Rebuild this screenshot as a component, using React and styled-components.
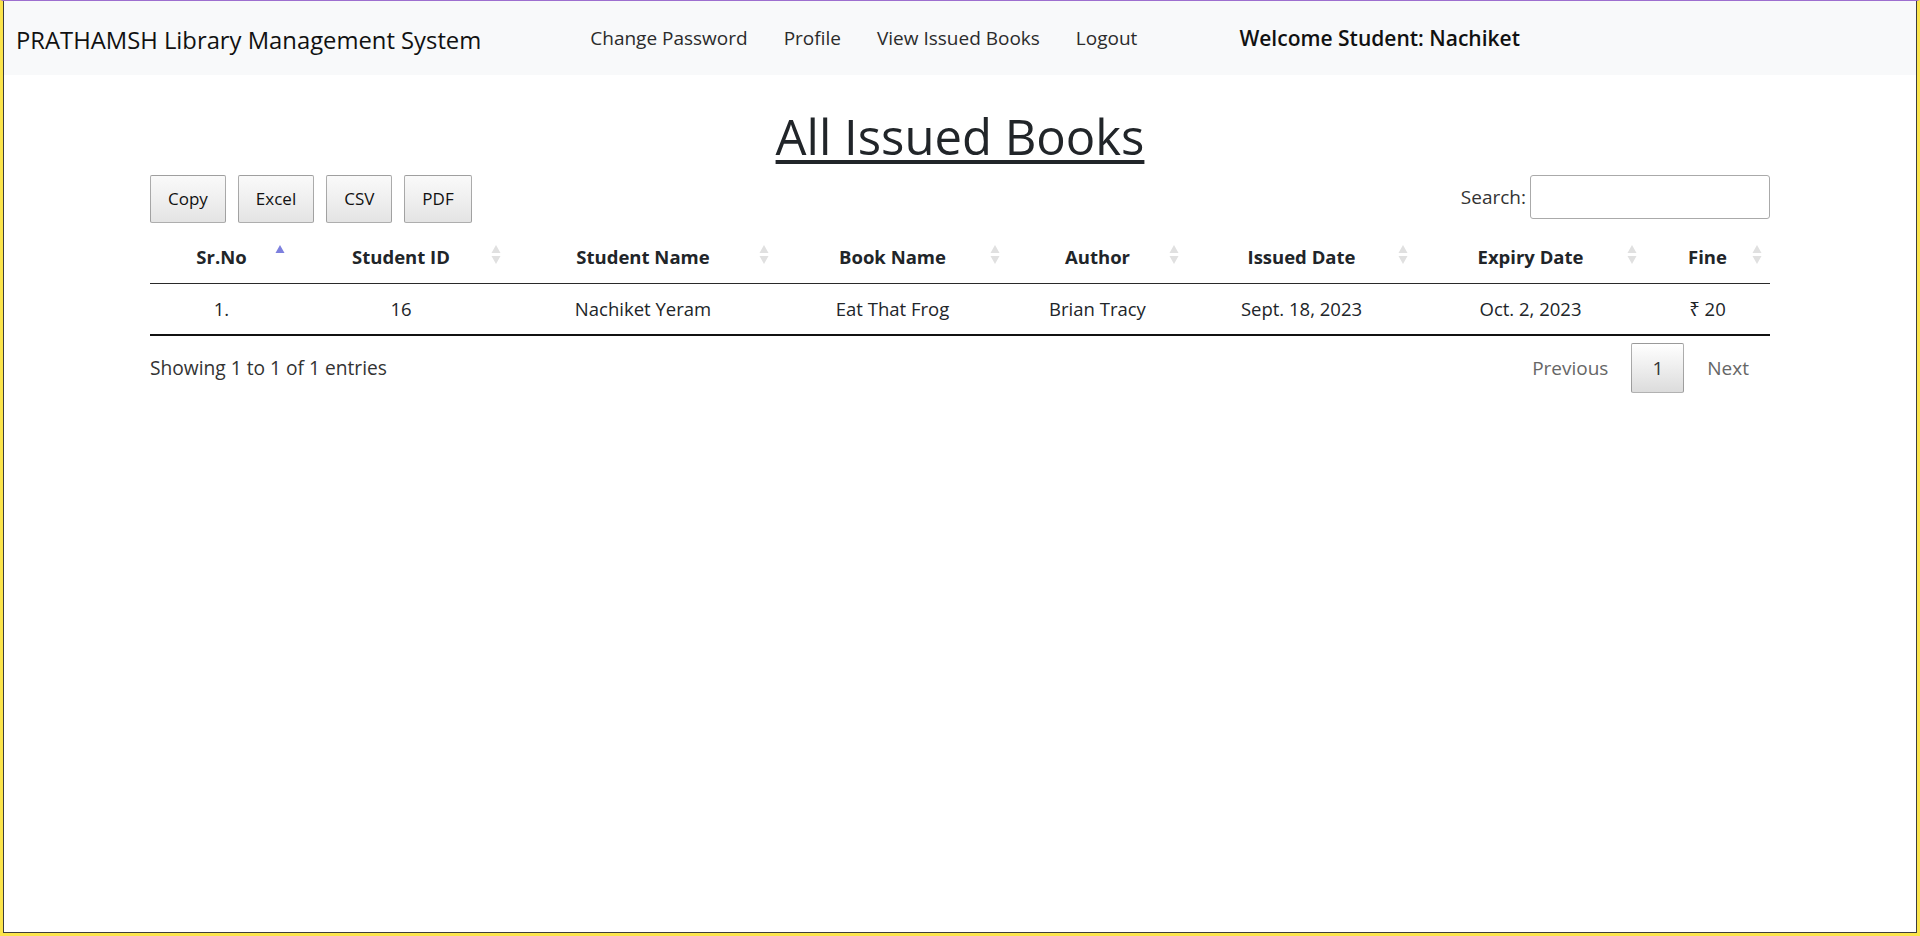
import React from "react";
import styled, { createGlobalStyle } from "styled-components";

const GlobalStyle = createGlobalStyle`
  html, body {
    margin: 0;
    padding: 0;
    background: #ffffff;
    overflow: hidden;
  }

  body {
    font-family: "Open Sans", "Noto Sans", sans-serif;
    color: #212529;
  }
`;

const Frame = styled.div`
  width: 1920px;
  height: 936px;
  box-sizing: border-box;
  border: 3px solid #fbe44b;
  border-top: 1px solid #9d6fcf;
  background: #fbe44b;
`;

const Page = styled.div`
  height: 100%;
  box-sizing: border-box;
  border: 1px solid #3c3c3c;
  border-top: none;
  background: #ffffff;
  display: flex;
  flex-direction: column;
`;

const Navbar = styled.nav`
  height: 74px;
  background: #f8f9fa;
  display: flex;
  align-items: center;
  padding: 0 12px;
`;

const Brand = styled.a`
  font-size: 23.8px;
  color: #111;
  white-space: nowrap;
  margin-top: 3px;
`;

const NavList = styled.ul`
  list-style: none;
  margin: 0 0 0 109px;
  padding: 0;
  display: flex;
  gap: 36px;
`;

const NavLink = styled.li`
  font-size: 19px;
  color: #2b2b2b;
  white-space: nowrap;
`;

const Welcome = styled.span`
  margin-left: 102px;
  font-size: 21px;
  font-weight: 600;
  color: #111;
  white-space: nowrap;
`;

const Container = styled.main`
  width: 1620px;
  margin: 0 auto;
`;

const Title = styled.h1`
  margin: 32px 0 9px;
  text-align: center;
  font-size: 49px;
  font-weight: 500;
  line-height: 1.2;
  color: #212529;

  u {
    text-decoration-thickness: 4px;
    text-underline-offset: 5px;
  }
`;

const Toolbar = styled.div`
  display: flex;
  justify-content: space-between;
  align-items: flex-start;
`;

const ButtonGroup = styled.div`
  display: flex;
  gap: 12px;
`;

const ExportButton = styled.button`
  font-family: inherit;
  font-size: 17px;
  line-height: 28px;
  padding: 9px 17px;
  color: #111;
  border: 1px solid rgba(0, 0, 0, 0.3);
  border-radius: 2px;
  background: linear-gradient(to bottom, #fafafa 0%, #e4e4e4 100%);
`;

const SearchLabel = styled.label`
  display: flex;
  align-items: center;
  font-size: 19px;
  color: #333;
  gap: 4px;
`;

const SearchInput = styled.input`
  width: 240px;
  height: 44px;
  box-sizing: border-box;
  border: 1px solid #aaa;
  border-radius: 3px;
  padding: 5px;
  font-family: inherit;
  font-size: 19px;
`;

const Table = styled.table`
  width: 100%;
  margin-top: 5px;
  table-layout: fixed;
  border-collapse: collapse;
  font-size: 18.5px;
  line-height: 30px;
  border-bottom: 2px solid #111;
`;

const HeadCell = styled.th`
  position: relative;
  padding: 14px 12px 11px;
  text-align: center;
  font-weight: 700;
  color: #212529;
  border-bottom: 1px solid #2a2a2a;
  white-space: nowrap;
`;

const Cell = styled.td`
  padding: 10px 12px;
  text-align: center;
  color: #212529;
`;

const SortIcon = styled.svg`
  position: absolute;
  right: ${(p) => p.$right}px;
  top: 50%;
  transform: translateY(-50%);
`;

const Footer = styled.div`
  display: flex;
  justify-content: space-between;
  align-items: center;
  margin-top: 7px;
`;

const Info = styled.div`
  font-size: 19.2px;
  color: #333;
`;

const Pagination = styled.div`
  display: flex;
  align-items: center;
  gap: 2px;
`;

const PageButton = styled.span`
  font-size: 19px;
  line-height: 30px;
  padding: 9px 20px;
  color: ${(p) => (p.$current ? "#333" : "#666")};
  border: 1px solid ${(p) => (p.$current ? "rgba(0,0,0,0.3)" : "transparent")};
  border-radius: 2px;
  background: ${(p) =>
    p.$current ? "linear-gradient(to bottom, #ffffff 0%, #dcdcdc 100%)" : "none"};
`;

const Sort = ({ active }) =>
  active ? (
    <SortIcon $right={7} width="12" height="22" viewBox="0 0 12 22">
      <polygon points="1.5,9 10.5,9 6,1" fill="#7d80de" />
    </SortIcon>
  ) : (
    <SortIcon $right={7} width="12" height="22" viewBox="0 0 12 22">
      <polygon points="1.5,9 10.5,9 6,1" fill="#e0e0e0" />
      <polygon points="1.5,12 10.5,12 6,20" fill="#e0e0e0" />
    </SortIcon>
  );

const columns = [
  { title: "Sr.No", width: 143 },
  { title: "Student ID", width: 216 },
  { title: "Student Name", width: 268 },
  { title: "Book Name", width: 231 },
  { title: "Author", width: 179 },
  { title: "Issued Date", width: 229 },
  { title: "Expiry Date", width: 229 },
  { title: "Fine", width: 125 },
];

const rows = [
  ["1.", "16", "Nachiket Yeram", "Eat That Frog", "Brian Tracy", "Sept. 18, 2023", "Oct. 2, 2023", "₹ 20"],
];

export default function App() {
  return (
    <>
      <GlobalStyle />
      <Frame>
        <Page>
          <Navbar>
            <Brand>PRATHAMSH Library Management System</Brand>
            <NavList>
              <NavLink>Change Password</NavLink>
              <NavLink>Profile</NavLink>
              <NavLink>View Issued Books</NavLink>
              <NavLink>Logout</NavLink>
            </NavList>
            <Welcome>Welcome Student: Nachiket</Welcome>
          </Navbar>

          <Container>
            <Title>
              <u>All Issued Books</u>
            </Title>

            <Toolbar>
              <ButtonGroup>
                <ExportButton>Copy</ExportButton>
                <ExportButton>Excel</ExportButton>
                <ExportButton>CSV</ExportButton>
                <ExportButton>PDF</ExportButton>
              </ButtonGroup>
              <SearchLabel>
                Search:
                <SearchInput type="search" />
              </SearchLabel>
            </Toolbar>

            <Table>
              <colgroup>
                {columns.map((c) => (
                  <col key={c.title} style={{ width: c.width }} />
                ))}
              </colgroup>
              <thead>
                <tr>
                  {columns.map((c, i) => (
                    <HeadCell key={c.title}>
                      {c.title}
                      <Sort active={i === 0} />
                    </HeadCell>
                  ))}
                </tr>
              </thead>
              <tbody>
                {rows.map((r) => (
                  <tr key={r[0]}>
                    {r.map((v, i) => (
                      <Cell key={i}>{v}</Cell>
                    ))}
                  </tr>
                ))}
              </tbody>
            </Table>

            <Footer>
              <Info>Showing 1 to 1 of 1 entries</Info>
              <Pagination>
                <PageButton>Previous</PageButton>
                <PageButton $current>1</PageButton>
                <PageButton>Next</PageButton>
              </Pagination>
            </Footer>
          </Container>
        </Page>
      </Frame>
    </>
  );
}
